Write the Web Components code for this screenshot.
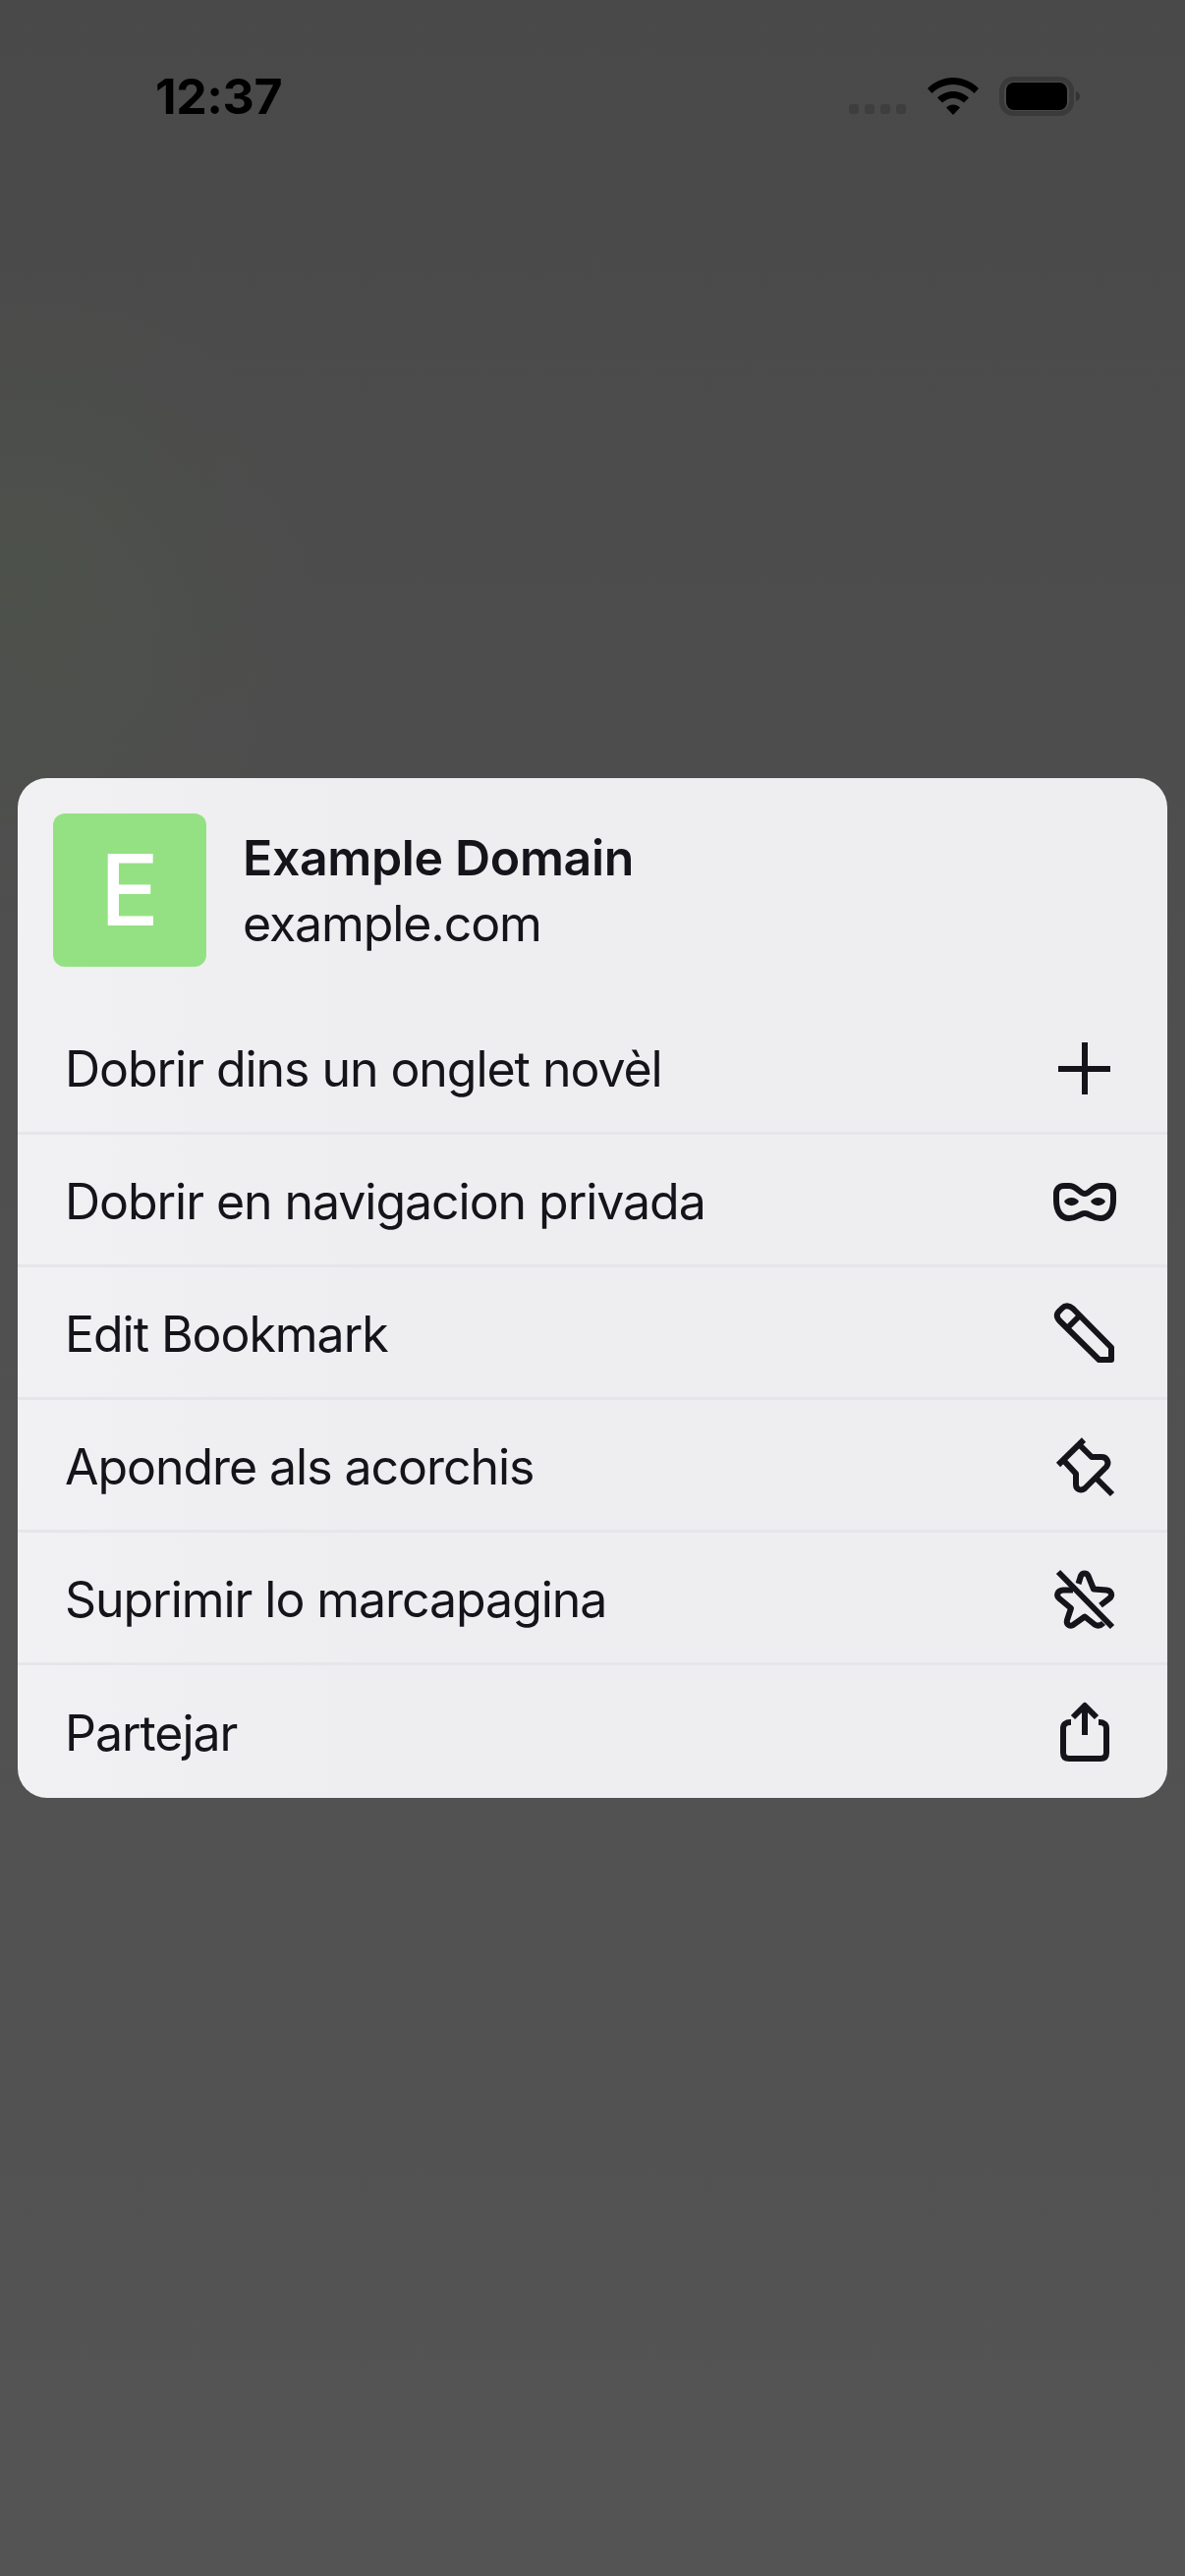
<!DOCTYPE html>
<html><head><meta charset="utf-8">
<style>
html,body{margin:0;padding:0;height:100%}
body{font-family:Inter,"Noto Sans",sans-serif}
</style></head><body>
<phone-screen>
<status-bar slot="status"></status-bar>
<context-menu slot="menu">
<site-header slot="header" letter="E" name="Example Domain" url="example.com"></site-header>
<menu-row label="Dobrir dins un onglet novèl" icon="plus"></menu-row>
<menu-row label="Dobrir en navigacion privada" icon="mask"></menu-row>
<menu-row label="Edit Bookmark" icon="pencil"></menu-row>
<menu-row label="Apondre als acorchis" icon="pin"></menu-row>
<menu-row label="Suprimir lo marcapagina" icon="star"></menu-row>
<menu-row label="Partejar" icon="share" last></menu-row>
</context-menu>
</phone-screen>
<script>
const ICONS={
plus:'<path d="M9 37H62M36 10V63" stroke-linecap="butt"/>',
mask:'<path d="M36 29C31 29 28 21 20 21H15C10 21 7 24 7 29V36C7 47 12 54 20 54C28 54 31 49 36 49C41 49 44 54 52 54C60 54 65 47 65 36V29C65 24 62 21 57 21H52C44 21 41 29 36 29Z"/><path d="M15 37C18 31.500 27 31.500 30 37C27 42.500 18 42.500 15 37Z" fill="#15141a" stroke="none"/><path d="M42 37C45 31.500 54 31.500 57 37C54 42.500 45 42.500 42 37Z" fill="#15141a" stroke="none"/>',
pencil:'<path d="M63 63H50.5L11 24C6.500 19.500 7 16 10.500 13L13 10.500C16 7.500 20 7.500 24 11L63 50.500Z"/><path d="M18 31L31 18" stroke-linecap="butt"/>',
pin:'<path d="M9 35L35 9.500" stroke-linecap="butt"/><path d="M30 14L43 27H53C59 27 61 33 58 37L36 59C32 62 27 60 27 55V44L15 31" stroke-linecap="butt"/><path d="M46 47L64 65" stroke-linecap="butt"/>',
star:'<path d="M9 9L64 65" stroke-linecap="butt"/><path d="M29.500 21L32 13C33.500 9.500 38 9.500 39.500 13L45 26.500L58 27.500C63 28 65 33 61 36L52 43" stroke-linecap="butt"/><path d="M24 27.500L14 27.500C8 28 6.500 33 10 36L22 46L18 58C17 62 20 65 24 63L36 54.500L46 62.500C50 65 53 63 55 61" stroke-linecap="butt"/>',
share:'<path d="M36 38V9" stroke-linecap="butt"/><path d="M24 20L36 8L48 20" stroke-linecap="butt"/><path d="M22 25H21C17 25 14 27 14 31V56C14 60 16 62 20 62H52C56 62 58 60 58 56V31C58 27 55 25 51 25H50" stroke-linecap="butt"/>'
};
function make(name,html){
  customElements.define(name,class extends HTMLElement{
    constructor(){super();this.attachShadow({mode:'open'});}
    connectedCallback(){this.shadowRoot.innerHTML=typeof html==='function'?html(this):html;}
  });
}
make('phone-screen',`<style>
:host{display:flex;flex-direction:column;width:1206px;height:2622px;box-sizing:border-box;overflow:hidden;
background:radial-gradient(ellipse 300px 320px at 20px 600px,rgba(80,100,70,.22),rgba(80,100,70,0)),linear-gradient(#494949,#4f4f4f 40%,#545454);}
.s{height:792px;flex:none}
.m{padding:0 18px}
</style><div class="s"><slot name="status"></slot></div><div class="m"><slot name="menu"></slot></div>`);
make('status-bar',`<style>
:host{display:flex;align-items:flex-start;justify-content:space-between;padding:68px 105px 0 158px;color:#000}
.t{font:700 50px/60px Inter,"Noto Sans",sans-serif;letter-spacing:-.4px;margin-top:0}
.r{display:flex;align-items:flex-start;padding-top:10px}
.d{display:flex;gap:6px;margin-top:28px;margin-right:22px}
.d i{width:10px;height:10px;border-radius:3px;background:#3e3e3e;display:block}
svg{display:block}
.w{margin-right:21px;margin-top:1px}
</style><span class="t">12:37</span><div class="r"><div class="d"><i></i><i></i><i></i><i></i></div>
<svg class="w" width="52" height="38" viewBox="0 0 52 38"><path d="M26 0C36 0 45 4 52 11L47.500 16C42 10.500 34.500 7 26 7S10 10.500 4.500 16L0 11C7 4 16 0 26 0Z"/><path d="M26 14C32 14 37.500 16.500 42 20.500L37 25.500C34 23 30 21 26 21S18 23 15 25.500L10 20.500C14.500 16.500 20 14 26 14Z"/><path d="M26 27.500C28.500 27.500 31 28.500 33 30.500L26 38L19 30.500C21 28.500 23.500 27.500 26 27.500Z"/></svg>
<svg width="84" height="40" viewBox="0 0 84 40"><rect x="2.500" y="2.500" width="71" height="35" rx="12" fill="none" stroke="#3a3a3a" stroke-width="5"/><rect x="7" y="6" width="62" height="28" rx="8" fill="#000"/><path d="M78 15C81 16 82 18 82 20S81 24 78 25Z" fill="#333"/></svg>
</div>`);
make('context-menu',`<style>
:host{display:block;width:1170px;background:linear-gradient(90deg,#f1f1f3,#eeeef0 30%,#eeeef0);border-radius:30px;overflow:hidden;color:#15141a}
</style><slot name="header"></slot><slot></slot>`);
make('site-header',el=>`<style>
:host{display:flex;align-items:center;gap:37px;padding:36px 36px 36px;height:156px}
.l{flex:none;width:156px;height:156px;border-radius:12px;background:#94e183;color:#fff;display:flex;align-items:center;justify-content:center;font:500 100px/1 Inter,"Noto Sans",sans-serif}
.c{display:flex;flex-direction:column;gap:5px;margin-top:0}
.n{font:600 50px/62px Inter,"Noto Sans",sans-serif;letter-spacing:-.35px}
.u{font:400 50px/62px Inter,"Noto Sans",sans-serif;letter-spacing:-1.1px}
</style><div class="l">${el.getAttribute('letter')}</div><div class="c"><span class="n">${el.getAttribute('name')}</span><span class="u">${el.getAttribute('url')}</span></div>`);
make('menu-row',el=>`<style>
:host{display:flex;align-items:center;justify-content:space-between;box-sizing:border-box;height:135px;padding:2px 48px 0 48px;${el.hasAttribute('last')?'':'border-bottom:3px solid #e6e6ea;'}}
span{font:400 50px/60px Inter,"Noto Sans",sans-serif;letter-spacing:-1.05px;margin-top:${el.hasAttribute('last')?'0':'2px'}}
svg{display:block;flex:none;width:72px;height:72px;fill:none;stroke:#15141a;stroke-width:6;stroke-linejoin:round;stroke-linecap:round}
</style><span>${el.getAttribute('label')}</span><svg viewBox="0 0 72 72">${ICONS[el.getAttribute('icon')]}</svg>`);
</script>
</body></html>
